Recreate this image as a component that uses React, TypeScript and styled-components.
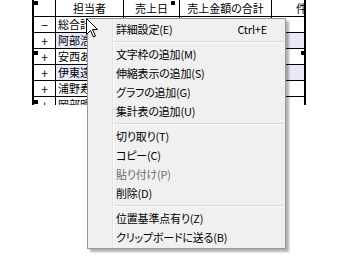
import React from "react";
import styled, { createGlobalStyle } from "styled-components";

const Global = createGlobalStyle`
  html, body { margin: 0; padding: 0; background: #ffffff; overflow: hidden; }
  body { font-family: "Noto Sans CJK JP", "Noto Sans", sans-serif; }
`;

const Stage = styled.div`
  position: relative;
  width: 341px;
  height: 256px;
  overflow: hidden;
  background: #ffffff;
`;

const TableClip = styled.div`
  margin-left: 32px;
  width: 274px;
  height: 105px;
  overflow: hidden;
  border-left: 2px solid #000;
  border-right: 2px solid #000;
  box-sizing: border-box;
`;

const Grid = styled.table`
  border-collapse: collapse;
  table-layout: fixed;
  width: 304px;
  font-size: 11px;
  line-height: 15px;
  color: #000;
  font-feature-settings: "palt";
`;

const HeadCell = styled.th<{ $w: number }>`
  width: ${(p) => p.$w}px;
  height: 16px;
  padding: 0;
  border: 1px solid #000;
  border-top: none;
  font-weight: normal;
  text-align: center;
  white-space: nowrap;
  overflow: hidden;
  background: #fff;
  &:first-child { border-left: none; }
`;

const Row = styled.tr<{ $alt: boolean }>`
  background: ${(p) => (p.$alt ? "#e8e8fa" : "#ffffff")};
`;

const ToggleCell = styled.td`
  height: 15px;
  padding: 0;
  border: 1px solid #000;
  border-left: none;
  text-align: center;
  background: #fff;
  font-size: 12px;
`;

const NameCell = styled.td`
  height: 15px;
  padding: 0 0 0 2px;
  border: 1px solid #000;
  white-space: nowrap;
  overflow: hidden;
`;

const DataCell = styled.td`
  height: 15px;
  padding: 0;
  border: 1px solid #000;
`;

const Mark = styled.div<{ $x: number; $y: number }>`
  position: absolute;
  left: ${(p) => p.$x}px;
  top: ${(p) => p.$y}px;
  width: 4px;
  height: 4px;
  background: #000;
`;

const Menu = styled.div`
  position: absolute;
  left: 87px;
  top: 18px;
  width: 199px;
  box-sizing: border-box;
  padding: 1px 0;
  background: #f0f0f0;
  border: 1px solid #979797;
  box-shadow: 3px 3px 2px rgba(0, 0, 0, 0.3);
  display: flex;
  flex-direction: column;
  font-size: 11px;
  letter-spacing: -0.2px;
  color: #000;
  font-feature-settings: "palt";
  background-image: linear-gradient(to right, transparent 24px, #e2e2e2 24px, #e2e2e2 25px, #fcfcfc 25px, #fcfcfc 26px, transparent 26px);
`;

const Item = styled.div<{ $disabled?: boolean }>`
  display: flex;
  align-items: center;
  justify-content: space-between;
  height: 19px;
  padding: 0 18px 0 28px;
  color: ${(p) => (p.$disabled ? "#6d6d6d" : "#000")};
  white-space: nowrap;
  line-height: 19px;
`;

const Separator = styled.div`
  height: 1px;
  margin: 2px 1px 2px 26px;
  background: #d7d7d7;
  border-bottom: 1px solid #fcfcfc;
`;

const Cursor = styled.svg`
  position: absolute;
  left: 86px;
  top: 18px;
`;

const rows = [
  { t: "−", n: "総合計", alt: false },
  { t: "+", n: "阿部浩二", alt: true },
  { t: "+", n: "安西あゆみ", alt: false },
  { t: "+", n: "伊東遠子", alt: true },
  { t: "+", n: "浦野寿子", alt: false },
  { t: "+", n: "岡部明男", alt: false },
];

type MI = { label: string; key?: string; disabled?: boolean } | "sep";
const items: MI[] = [
  { label: "詳細設定(E)", key: "Ctrl+E" },
  "sep",
  { label: "文字枠の追加(M)" },
  { label: "伸縮表示の追加(S)" },
  { label: "グラフの追加(G)" },
  { label: "集計表の追加(U)" },
  "sep",
  { label: "切り取り(T)" },
  { label: "コピー(C)" },
  { label: "貼り付け(P)", disabled: true },
  { label: "削除(D)" },
  "sep",
  { label: "位置基準点有り(Z)" },
  { label: "クリップボードに送る(B)" },
];

export default function App() {
  return (
    <Stage>
      <Global />
      <TableClip>
        <Grid>
          <thead>
            <tr>
              <HeadCell $w={21}></HeadCell>
              <HeadCell $w={67}>担当者</HeadCell>
              <HeadCell $w={55}>売上日</HeadCell>
              <HeadCell $w={91}>売上金額の合計</HeadCell>
              <HeadCell $w={70}>件数</HeadCell>
            </tr>
          </thead>
          <tbody>
            {rows.map((r, i) => (
              <Row key={i} $alt={r.alt}>
                <ToggleCell>{r.t}</ToggleCell>
                <NameCell>{r.n}</NameCell>
                <DataCell />
                <DataCell />
                <DataCell />
              </Row>
            ))}
          </tbody>
        </Grid>
      </TableClip>
      <Mark $x={34} $y={1} />
      <Mark $x={171} $y={1} />
      <Mark $x={34} $y={51} />
      <Mark $x={301} $y={51} />
      <Mark $x={34} $y={100} />
      <Menu>
        {items.map((it, i) =>
          it === "sep" ? (
            <Separator key={i} />
          ) : (
            <Item key={i} $disabled={it.disabled}>
              <span>{it.label}</span>
              {it.key && <span>{it.key}</span>}
            </Item>
          )
        )}
      </Menu>
      <Cursor width="13" height="20" viewBox="0 0 13 20">
        <path
          d="M0.5 0.5 L0.5 16.5 L4.5 12.5 L7.5 19 L9.5 18 L6.5 11.5 L11.5 11.5 Z"
          fill="#fff"
          stroke="#000"
          strokeWidth="1"
          strokeLinejoin="miter"
        />
      </Cursor>
    </Stage>
  );
}
